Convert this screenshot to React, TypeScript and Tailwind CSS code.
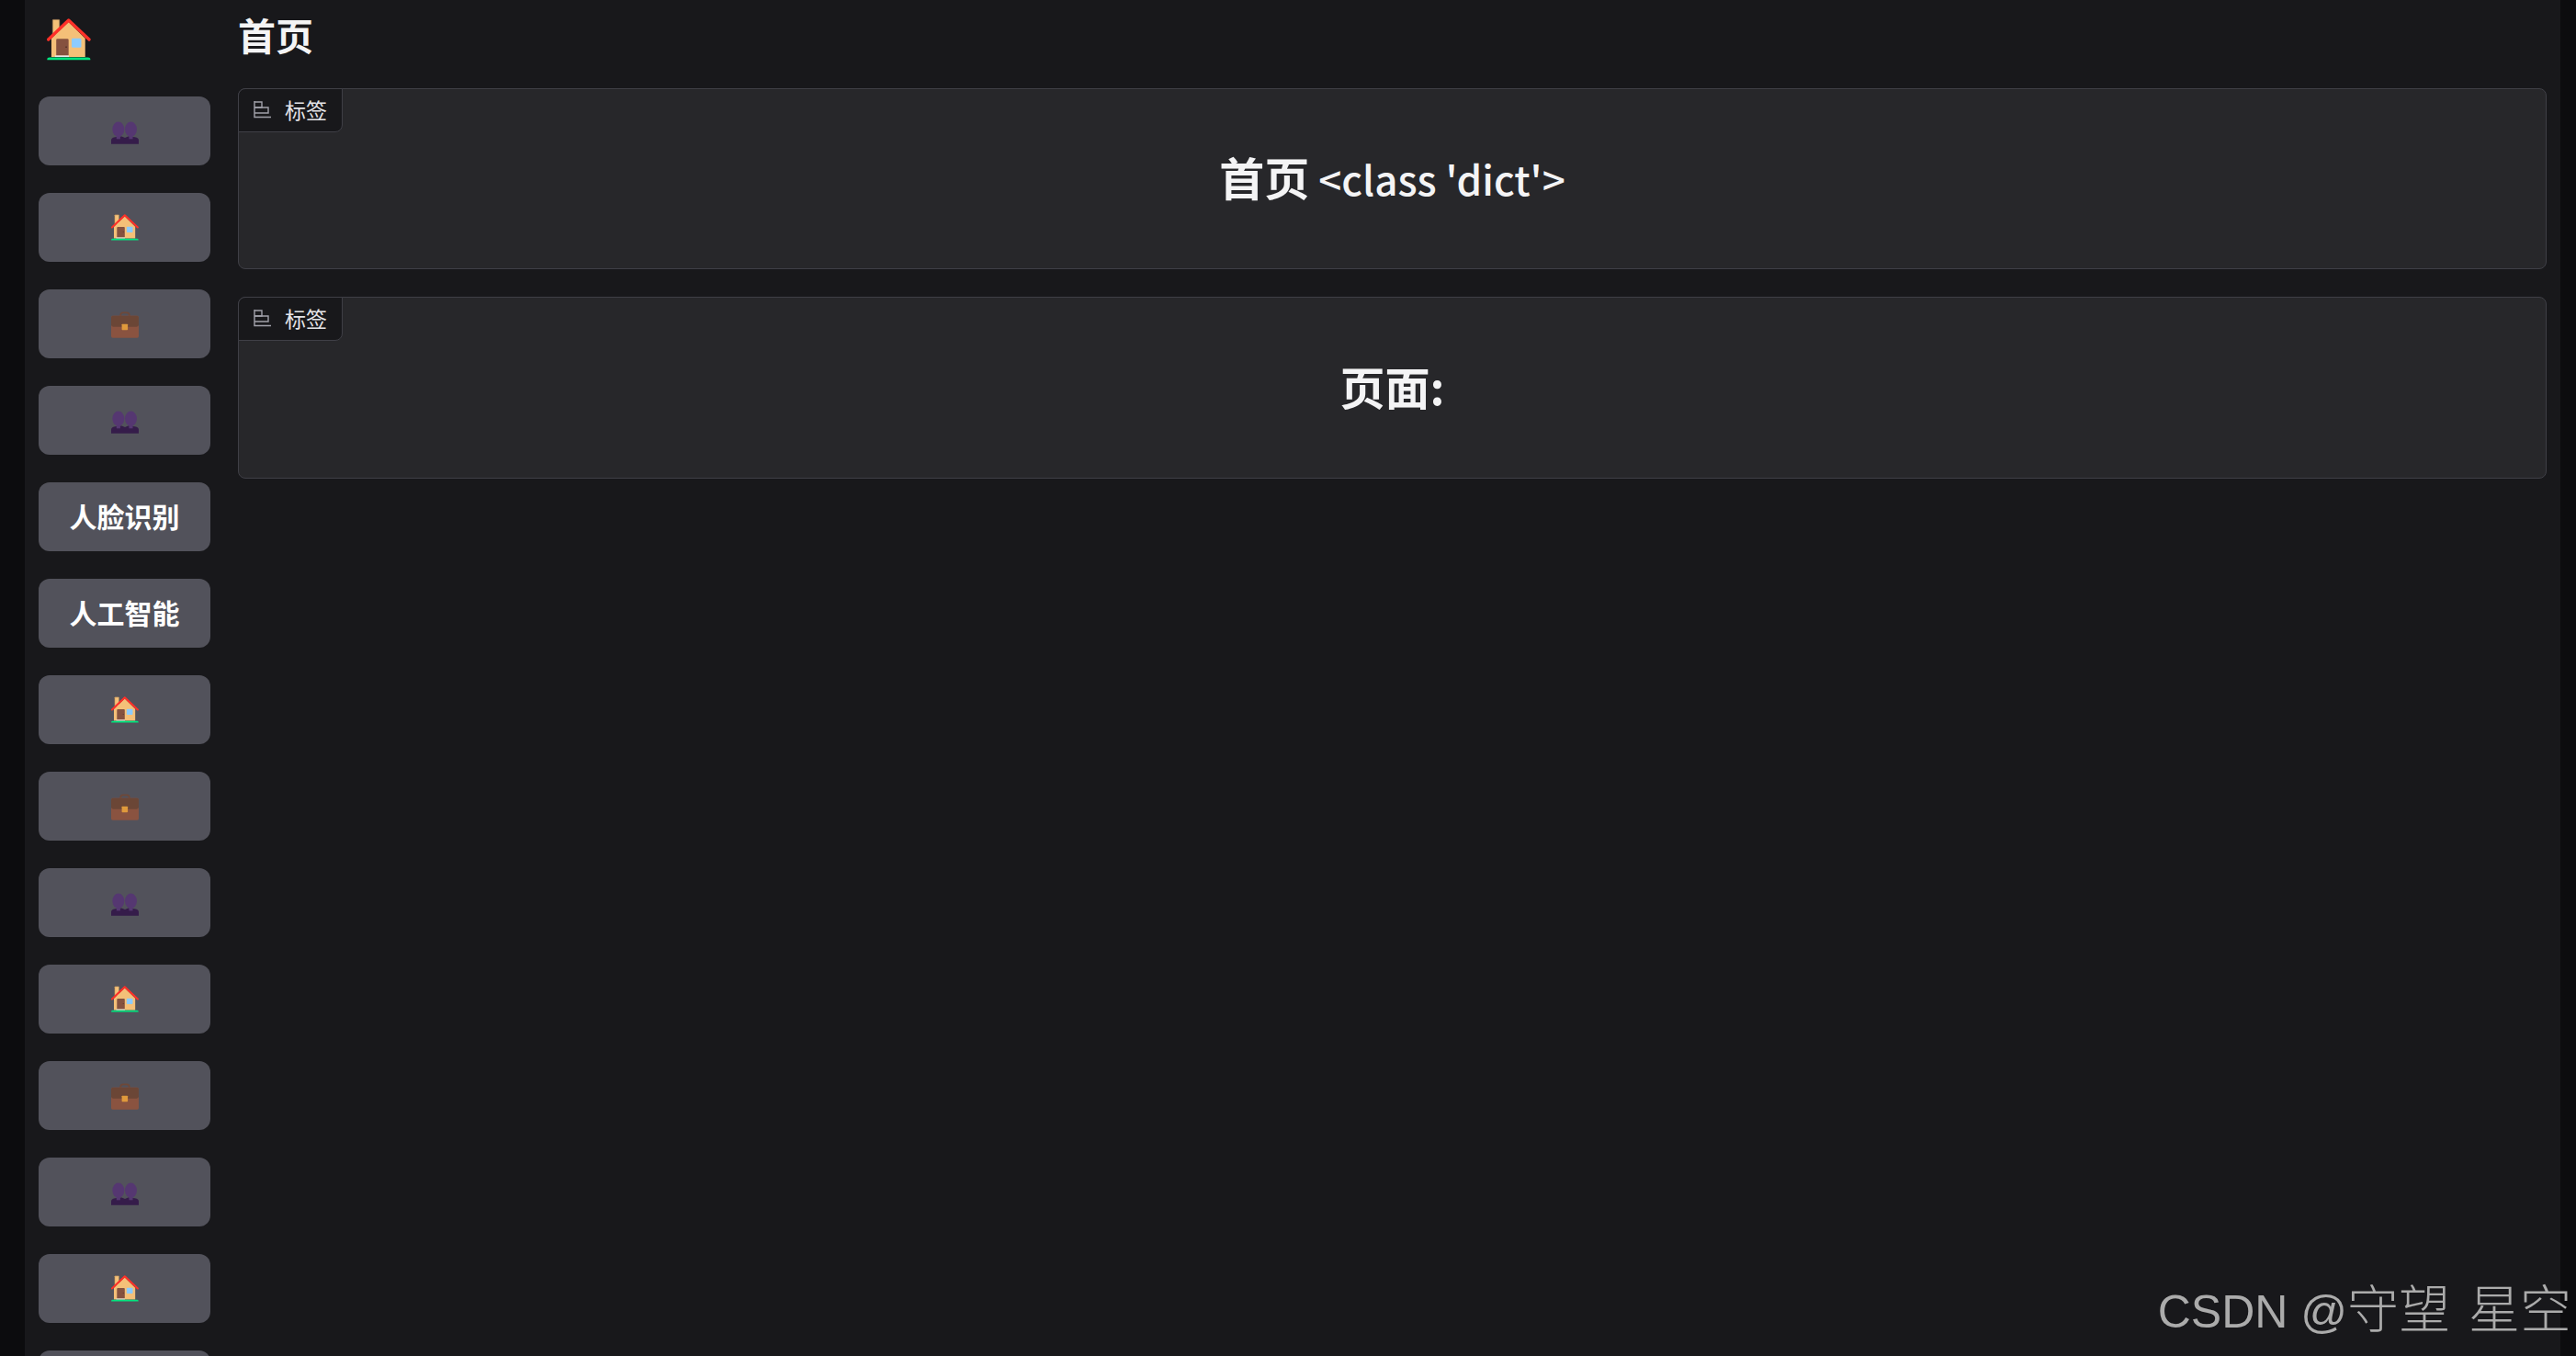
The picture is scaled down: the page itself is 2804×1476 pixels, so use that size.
type IconName = 'people' | 'house' | 'case';

const buttons: (IconName | string)[] = [
    'people',
    'house',
    'case',
    'people',
    '人脸识别',
    '人工智能',
    'house',
    'case',
    'people',
    'house',
    'case',
    'people',
    'house',
    'case',
];

const cjk = 'font-["Noto_Sans_CJK_SC",sans-serif]';

function House({ className }: { className: string }) {
    return (
        <svg viewBox="64 60 144 140" className={className}>
            <rect x="82" y="64" width="23" height="50" rx="2" fill="#f4c078" stroke="#8a6a4a" strokeWidth="2" />
            <path d="M78 126 L135 72 L190 126 V188 H78 Z" fill="#f4c078" />
            <path d="M94 132 a4 4 0 0 1 4 -4 H131 a4 4 0 0 1 4 4 V183 H94 Z" fill="#85523f" />
            <rect x="90" y="183" width="46" height="5" fill="#e5e7eb" />
            <circle cx="127" cy="155" r="2" fill="#2b1a14" />
            <rect x="145" y="126" width="32" height="31" rx="4" fill="#8ccbff" />
            <path d="M68 130 L135 66 L203 130" fill="none" stroke="#ff3028" strokeWidth="10" strokeLinecap="round" strokeLinejoin="round" />
            <path d="M64 198 a8 8 0 0 1 8 -9 H199 a8 8 0 0 1 8 9 Z" fill="#00e57f" />
        </svg>
    );
}

function People({ className }: { className: string }) {
    return (
        <svg viewBox="62 40 88 72" className={className}>
            <path d="M62 112 V100 Q62 92 74 90 L96 88 L106 92 L116 88 L138 90 Q150 92 150 100 V112 Z" fill="#351c4a" />
            <rect x="79" y="76" width="12" height="20" fill="#553771" />
            <rect x="119" y="76" width="12" height="20" fill="#553771" />
            <ellipse cx="85" cy="65" rx="19" ry="24" fill="#553771" />
            <ellipse cx="125" cy="65" rx="19" ry="24" fill="#553771" />
        </svg>
    );
}

function Briefcase({ className }: { className: string }) {
    return (
        <svg viewBox="62 15 88 83" className={className}>
            <path d="M92 30 V26 Q92 18 100 18 H112 Q120 18 120 26 V30" fill="none" stroke="#6e4838" strokeWidth="5" />
            <rect x="62" y="28" width="88" height="70" rx="5" fill="#8a5340" />
            <path d="M62 33 a5 5 0 0 1 5 -5 H145 a5 5 0 0 1 5 5 V56 Q150 63 143 63 H69 Q62 63 62 56 Z" fill="#6b4636" />
            <rect x="96" y="54" width="19" height="19" rx="2" fill="#e09a3c" />
        </svg>
    );
}

function ChartIcon() {
    return (
        <svg viewBox="0 0 20 20" className="h-[20px] w-[20px] text-[#a1a1aa]" fill="none" stroke="currentColor" strokeWidth="1.4">
            <path d="M1 1 V18.5 H19" />
            <path d="M1 2 H9 V8 H1" />
            <path d="M1 8 H16 V14 H1" />
        </svg>
    );
}

function SideButton({ item }: { item: string }) {
    const icon = 'h-[29px] w-[30px]';
    return (
        <button
            type="button"
            className={`flex h-[75px] w-[187px] shrink-0 items-center justify-center rounded-[12px] bg-[#52525b] pb-[2px] text-[30px] font-bold text-white ${cjk}`}
        >
            {item === 'people' && <People className={`${icon} mt-[5px]`} />}
            {item === 'house' && <House className={`${icon} mt-[2px]`} />}
            {item === 'case' && <Briefcase className={`${icon} mt-[3px]`} />}
            {item !== 'people' && item !== 'house' && item !== 'case' && item}
        </button>
    );
}

function LabelCard({ height, children }: { height: string; children: React.ReactNode }) {
    return (
        <div className={`relative flex items-center justify-center rounded-[8px] border border-[#3f3f46] bg-[#27272a] pb-[5px] ${height}`}>
            <div className="absolute -left-px -top-px flex h-[48px] w-[114px] items-center gap-[14px] rounded-br-[8px] rounded-tl-[8px] border border-[#3f3f46] bg-[#18181b] pb-[2px] pl-[16px]">
                <ChartIcon />
                <span className={`text-[23px] leading-none text-[#e4e4e7] ${cjk}`}>标签</span>
            </div>
            <div className={`flex items-baseline text-[#f4f4f5] ${cjk}`}>{children}</div>
        </div>
    );
}

export default function App() {
    return (
        <div className="relative flex h-screen overflow-hidden bg-[#18181b]">
            <div className="w-[27px] shrink-0 bg-[#0c0c0e]" />

            <aside className="flex w-[232px] shrink-0 flex-col pl-[15px] pt-[20px]">
                <House className="ml-[9px] h-[46px] w-[48px] shrink-0" />
                <div className="mt-[39px] flex flex-col gap-[30px]">
                    {buttons.map((item, i) => (
                        <SideButton key={i} item={item} />
                    ))}
                </div>
            </aside>

            <main className="flex min-w-0 flex-1 flex-col pr-[15px]">
                <h1 className={`h-[96px] pt-[7px] text-[41px] leading-[60px] font-bold text-[#f4f4f5] ${cjk}`}>首页</h1>
                <div className="flex flex-col gap-[30px]">
                    <LabelCard height="h-[197px]">
                        <span className="text-[49px] font-bold">首页</span>
                        <span className="ml-[10px] text-[44px] font-medium">&lt;class 'dict'&gt;</span>
                    </LabelCard>
                    <LabelCard height="h-[198px]">
                        <span className="text-[49px] font-bold">页面:</span>
                    </LabelCard>
                </div>
            </main>

            <div className="w-[17px] shrink-0 bg-[#0c0c0e]" />

            <div className="absolute bottom-[23px] right-[5px] flex items-baseline whitespace-nowrap text-[#ababab]">
                <span className="font-['Liberation_Sans',sans-serif] text-[50px] leading-none">CSDN @</span>
                <span className={`text-[56px] leading-none font-light ${cjk}`}>守望</span>
                <span className={`ml-[20px] text-[56px] leading-none font-light ${cjk}`}>星空</span>
            </div>
        </div>
    );
}
